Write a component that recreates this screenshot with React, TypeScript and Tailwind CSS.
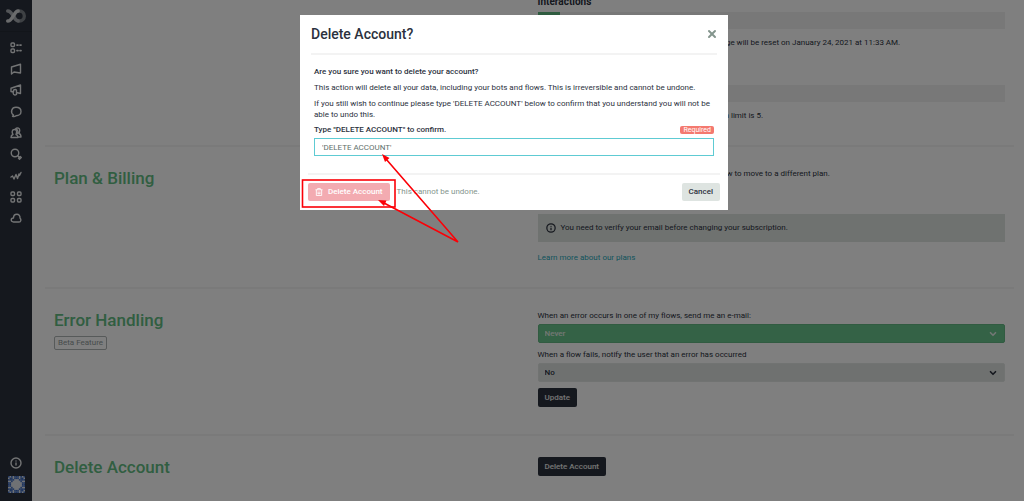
import { useState } from "react";
import type { ReactNode } from "react";
import { ChevronDown, Info, X } from "lucide-react";

interface IconProps {
  children: ReactNode;
}

function Icon({ children }: IconProps) {
  return (
    <svg
      viewBox="0 0 24 24"
      className="w-3 h-3"
      fill="none"
      stroke="currentColor"
      strokeWidth="2.8"
      strokeLinejoin="round"
      strokeLinecap="round"
      aria-hidden="true"
    >
      {children}
    </svg>
  );
}

const navItems = [
  {
    label: "Flows",
    icon: (
      <>
        <rect x="2" y="2" width="7" height="7" rx="2" />
        <rect x="2" y="14" width="7" height="7" rx="2" />
        <path d="M14 6h2M20 6h2M14 17h2M20 17h2" strokeWidth="3.5" />
      </>
    ),
  },
  { label: "Content", icon: <path d="M3 8 21 2.500V20L8 18l-5 4z" /> },
  {
    label: "Broadcasts",
    icon: <path d="M2 8.500 21 2v17l-8-2v4c-3 2-6 1-6.500-2v-3L2 15zM7 16V12.500c2-2 5-2 6 0V17" />,
  },
  {
    label: "Messages",
    icon: <path d="M5 20.500c1.500-.500 2-1 2-2.500-7-5-4-15.500 5-15.500 6 0 10 3.500 10 8.500s-4 8.500-10 8.500c-2 1.500-4.500 1.800-7 1z" />,
  },
  {
    label: "Audience",
    icon: (
      <>
        <path d="M2 21c0-4 1-5 4-6-3-5-2-10 3-10s5 5 3 10c3 1 4 2 4 6z" />
        <path d="M11 4c3-4 10-2 8 5-.500 2-1 3-1 4 3 1 4 3 4 7h-5M13 5c3 1 3 5 2 8" />
      </>
    ),
  },
  {
    label: "Search",
    icon: (
      <>
        <circle cx="10" cy="10" r="7.500" />
        <path d="m15.500 15.500 2.500 2.500M17 20.500l3.500-3.500 2 2-3.500 3.500z" />
      </>
    ),
  },
  { label: "Analytics", icon: <path d="m2 14 3-2 3 6 4-9 3 8 3-9 1 3 3-6" /> },
  {
    label: "Integrations",
    icon: (
      <>
        <rect x="2" y="2" width="7" height="7" rx="2" />
        <rect x="15" y="2" width="7" height="7" rx="2" />
        <rect x="2" y="15" width="7" height="7" rx="2" />
        <rect x="15" y="15" width="7" height="7" rx="2" />
      </>
    ),
  },
  { label: "Cloud", icon: <path d="M7 20c-6 0-6-8 0-8 0-10 14-10 13 0 3 3 2 8-2 8z" /> },
];

// identicon cells, one string per row
const avatarRows = [
  "10101110101",
  "01101110110",
  "11110001111",
  "00100000100",
  "11000000011",
  "11000000011",
  "11000000011",
  "00100000100",
  "11110001111",
  "01101110110",
  "10101110101",
];

function Sidebar() {
  return (
    <nav className="w-8 shrink-0 min-h-screen flex flex-col items-center bg-[#2b313d] text-[#e6e8ea]">
      <a href="#home" aria-label="Home" className="w-full h-8 flex items-center justify-center border-b border-[#252a34]">
        <svg viewBox="0 0 36 26" className="w-5 h-4" fill="none" strokeWidth="6" aria-hidden="true">
          <circle cx="24" cy="13" r="9" stroke="#7c8288" />
          <path d="M3 4c5 0 7 4 10 9s5 9 9 9" stroke="#a7abb0" strokeLinecap="round" />
          <path d="M3 22c5 0 7-4 10-9s5-9 9-9" stroke="#d5d7d9" strokeLinecap="round" />
        </svg>
      </a>
      <ul className="h-48 mt-[5px] grid grid-rows-9">
        {navItems.map((item) => (
          <li key={item.label} className="flex items-center">
            <a href="#nav" aria-label={item.label}>
              <Icon>{item.icon}</Icon>
            </a>
          </li>
        ))}
      </ul>
      <div className="mt-auto pb-2 flex flex-col items-center gap-[7px]">
        <a href="#help" aria-label="Help">
          <Info className="w-3 h-3" strokeWidth={2.8} />
        </a>
        <a href="#profile" aria-label="Profile">
          <svg viewBox="0 0 11 11" className="w-[17px] h-[17px] bg-[#dfe3e8]" aria-hidden="true">
            {avatarRows.map((row, y) =>
              row.split("").map((cell, x) =>
                cell === "1" ? <rect key={`${x}-${y}`} x={x} y={y} width="1" height="1" fill="#3a68bd" /> : null
              )
            )}
          </svg>
        </a>
      </div>
    </nav>
  );
}

interface SectionProps {
  title?: string;
  badge?: string;
  className: string;
  children: ReactNode;
}

function Section({ title, badge, className, children }: SectionProps) {
  return (
    <section className={`grid grid-cols-2 gap-4 px-[9px] ${className}`}>
      <div>
        {title && <h2 className="text-[17px] leading-5 font-medium text-[#62bd83]">{title}</h2>}
        {badge && (
          <span className="block w-fit mt-1.5 px-[3px] border border-[#aeb4b4] rounded-xs text-[8px] leading-3 text-[#8e9898]">
            {badge}
          </span>
        )}
      </div>
      <div>{children}</div>
    </section>
  );
}

interface SelectFieldProps {
  id: string;
  label: string;
  options: string[];
  className: string;
}

function SelectField({ id, label, options, className }: SelectFieldProps) {
  return (
    <div className="mb-1.5">
      <label htmlFor={id} className="block text-[8px] leading-3 mb-0.5">
        {label}
      </label>
      <div className={`relative rounded-xs ${className}`}>
        <select id={id} className="block w-full h-[17px] px-1.5 appearance-none text-[8px] font-medium">
          {options.map((option) => (
            <option key={option}>{option}</option>
          ))}
        </select>
        <ChevronDown className="absolute right-1.5 top-1 w-2.5 h-2.5 pointer-events-none" strokeWidth={4} />
      </div>
    </div>
  );
}

interface DarkButtonProps {
  children: ReactNode;
}

function DarkButton({ children }: DarkButtonProps) {
  return (
    <button type="button" className="block h-[19px] px-[7px] rounded-xs bg-[#2b313d] text-[#e8e8e8] text-[8px] font-medium">
      {children}
    </button>
  );
}

function SettingsPage() {
  return (
    <main className="grow pl-[13px] pr-2.5 divide-y-2 divide-[#f5f5f5]">
      <Section className="h-[147px]">
        <h3 className="-mt-1 text-[10px] leading-3 font-bold">Interactions</h3>
        <div className="mt-1 h-[17px] bg-[#f0f0f0]">
          <div className="h-full w-[22px] bg-[#5fb981]" />
        </div>
        <p className="mt-2 text-[8px] leading-3 whitespace-nowrap">
          You have used 48 of your 1000 interactions. Your usage will be reset on January 24, 2021 at 11:33 AM.
        </p>
        <h3 className="mt-[18px] text-[10px] leading-3 font-bold">Bots</h3>
        <div className="mt-1.5 h-[17px] bg-[#f0f0f0]" />
        <p className="mt-2 text-[8px] leading-3 whitespace-nowrap">
          You have created 1 bot on your current plan. Your plan limit is 5.
        </p>
      </Section>

      <Section title="Plan & Billing" className="h-[142px] pt-[21px]">
        <p className="text-[8px] leading-3 whitespace-nowrap">
          You are currently on the free plan. Choose a plan below to move to a different plan.
        </p>
        <div className="mt-[34px] h-7 px-2 flex items-center gap-[5px] bg-[#dee4e1] text-[8px]">
          <Info className="w-2.5 h-2.5" strokeWidth={3} />
          You need to verify your email before changing your subscription.
        </div>
        <a href="#plans" className="block mt-2.5 text-[8px] leading-3 text-[#1fa9ba]">
          Learn more about our plans
        </a>
      </Section>

      <Section title="Error Handling" badge="Beta Feature" className="h-[147px] pt-[21px]">
        <SelectField
          id="error-email"
          label="When an error occurs in one of my flows, send me an e-mail:"
          options={["Never", "Always"]}
          className="bg-[#69c48c] border border-[#62b682] text-[#e5efe9]"
        />
        <SelectField
          id="error-notify"
          label="When a flow fails, notify the user that an error has occurred"
          options={["No", "Yes"]}
          className="bg-[#dfe3e1] border border-[#e3e7e5]"
        />
        <DarkButton>Update</DarkButton>
      </Section>

      <Section title="Delete Account" className="pt-[21px]">
        <DarkButton>Delete Account</DarkButton>
      </Section>
    </main>
  );
}

function Annotations() {
  return (
    <svg className="absolute inset-0 w-full h-full overflow-visible pointer-events-none" aria-hidden="true">
      <rect x="2.500" y="165" width="92.500" height="27" fill="none" stroke="#fb0007" strokeWidth="1.600" />
      <path d="M158 227 86 144M158 227 84 188" stroke="#fb0007" strokeWidth="1.600" />
      <path d="m82 139 7.500 4-4.500 4zM78 185l8.500.500-2.500 5.500z" fill="#fb0007" />
    </svg>
  );
}

function DeleteAccountDialog() {
  const [value, setValue] = useState("'DELETE ACCOUNT'");

  return (
    <div className="fixed inset-0 flex items-start justify-center pt-[15px] pl-1 bg-black/50">
      <div role="dialog" aria-modal="true" aria-labelledby="dialog-title" className="relative w-[428px] max-w-full bg-white">
        <div className="mx-[11px] h-10 flex items-center justify-between border-b-2 border-[#f3f3f3]">
          <h1 id="dialog-title" className="text-[14px] leading-5 font-medium">
            Delete Account?
          </h1>
          <button type="button" aria-label="Close" className="text-[#84958d]">
            <X className="w-3 h-3 -mr-px" strokeWidth={4} />
          </button>
        </div>

        <div className="px-3.5 pt-[11px] text-[8px]">
          <p className="leading-3 font-medium">Are you sure you want to delete your account?</p>
          <p className="mt-1 leading-3">
            This action will delete all your data, including your bots and flows. This is irreversible and cannot be undone.
          </p>
          <p className="mt-1 leading-[11px]">
            If you still wish to continue please type 'DELETE ACCOUNT' below to confirm that you understand you will not be
            able to undo this.
          </p>
          <div className="mt-1 flex items-center justify-between">
            <label htmlFor="confirm-delete" className="leading-3 font-medium">
              Type "DELETE ACCOUNT" to confirm.
            </label>
            <span className="px-[3px] rounded-xs bg-[#f4796f] text-[7px] leading-2 text-white">Required</span>
          </div>
          <input
            id="confirm-delete"
            type="text"
            value={value}
            onChange={(e) => setValue(e.target.value)}
            className="block w-full h-[18px] mt-0.5 px-[7px] border border-[#5ecbd3] outline-none text-[8px] text-[#5f706b]"
          />
        </div>

        <div className="mx-2 mt-[17px] pt-2 pb-[9px] flex items-center justify-between border-t-2 border-[#f3f3f3] text-[8px]">
          <div className="flex items-center gap-[7px]">
            <button type="button" className="h-[18px] px-[7px] flex items-center gap-[5px] rounded-xs bg-[#f3abb1] text-white font-medium">
              <svg viewBox="0 0 16 18" className="w-2 h-2" fill="none" stroke="currentColor" strokeWidth="2" aria-hidden="true">
                <path d="M0 4h16M5 4V1h6v3M2 4v13h12V4M6 8v5M10 8v5M5 13h6" />
              </svg>
              Delete Account
            </button>
            <span className="text-[#84958d]">This cannot be undone.</span>
          </div>
          <button type="button" className="h-[18px] px-[7px] rounded-xs bg-[#dee4e1] font-medium">
            Cancel
          </button>
        </div>
        <Annotations />
      </div>
    </div>
  );
}

export default function App() {
  return (
    <div className="min-h-screen flex overflow-hidden bg-white text-[#2b313d] font-[Roboto,sans-serif]">
      <Sidebar />
      <SettingsPage />
      <DeleteAccountDialog />
    </div>
  );
}
